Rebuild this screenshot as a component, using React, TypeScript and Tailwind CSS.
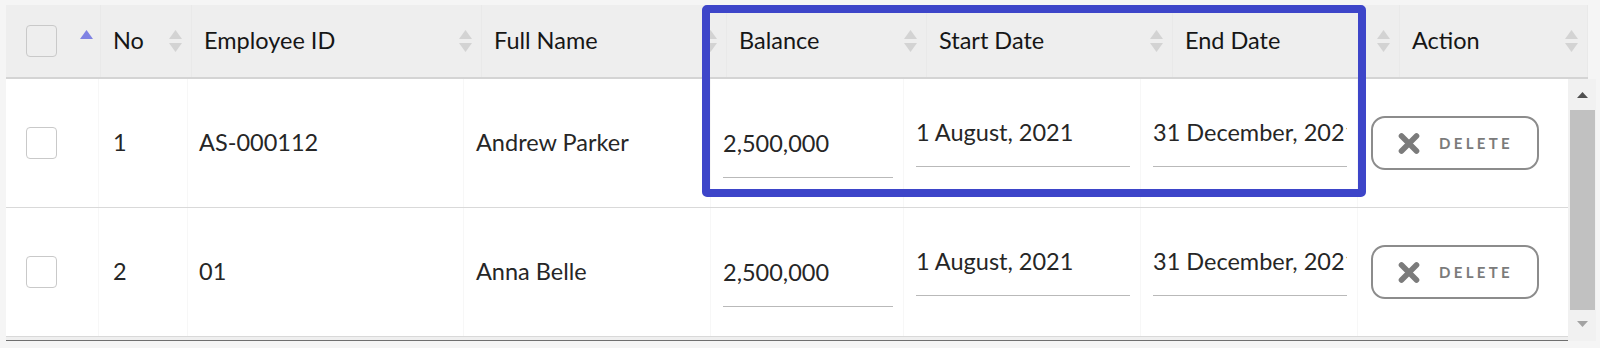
import React from "react";

const headerCols = [
  { label: "", w: "w-[95px]" },
  { label: "No", w: "w-[91px]" },
  { label: "Employee ID", w: "w-[290px]" },
  { label: "Full Name", w: "w-[245px]" },
  { label: "Balance", w: "w-[200px]" },
  { label: "Start Date", w: "w-[246px]" },
  { label: "End Date", w: "w-[227px]" },
  { label: "Action", w: "w-[188px]" },
];

const rows = [
  { no: "1", id: "AS-000112", name: "Andrew Parker", balance: "2,500,000", start: "1 August, 2021", end: "31 December, 2021" },
  { no: "2", id: "01", name: "Anna Belle", balance: "2,500,000", start: "1 August, 2021", end: "31 December, 2021" },
];

function SortIcon({ active }: { active?: boolean }) {
  return (
    <svg width="13" height="23" viewBox="0 0 13 23" className="shrink-0">
      <polygon points="6.5,0 13,9 0,9" fill={active ? "#7f82e3" : "#d3d3d3"} />
      {!active && <polygon points="0,13 13,13 6.5,22" fill="#d3d3d3" />}
    </svg>
  );
}

function Checkbox() {
  return <div className="h-[32px] w-[31px] rounded-[4px] border-[1.5px] border-[#c9c9c9]" />;
}

function DeleteButton() {
  return (
    <button className="flex h-[54px] w-[168px] items-center rounded-[14px] border-2 border-[#8c8c8c] bg-white pl-[25px]">
      <svg width="22" height="21" viewBox="0 0 22 21">
        <path d="M3.5 3 L18.5 18 M18.5 3 L3.5 18" stroke="#7b7b7b" strokeWidth="5.6" strokeLinecap="round" />
      </svg>
      <span className="ml-[19px] text-[15px] font-bold tracking-[0.22em] text-[#7b7b7b]">DELETE</span>
    </button>
  );
}

function FieldInput({ value, top }: { value: string; top: string }) {
  return (
    <div className={`w-full overflow-hidden border-b border-[#b9b9b9] pb-[21px] ${top}`}>
      <div className="whitespace-nowrap text-[23.5px] leading-[26px] text-[#262626]">{value}</div>
    </div>
  );
}

export default function App() {
  return (
    <div className="min-h-screen bg-[#f5f5f5] pl-[6px] pt-[5px] font-['Lato','Liberation_Sans',sans-serif]">
      <div className="relative w-[1590px]">
        {/* header */}
        <div className="flex h-[74px] w-[1582px] border-b-2 border-[#d4d4d4] bg-[#eeeeee]">
          {headerCols.map((c, i) => (
            <div
              key={i}
              className={`${c.w} flex items-center justify-between border-r border-[#e9e9e9] ${i === 0 ? "pl-[20px] pr-[7px]" : "pl-3 pr-[9px]"}`}
            >
              {i === 0 ? <Checkbox /> : <span className="text-[23.5px] text-[#161616]">{c.label}</span>}
              {i === 0 ? <SortIcon active /> : <SortIcon />}
            </div>
          ))}
        </div>

        {/* body */}
        <div className="flex">
          <div className="w-[1562px] bg-white">
            {rows.map((r) => (
              <div key={r.no} className="flex h-[129px] border-b border-[#d9d9d9] text-[23.5px] text-[#262626]">
                <div className="flex w-[93px] items-center border-r border-[#f7f7f7] pl-[20px]">
                  <Checkbox />
                </div>
                <div className="flex w-[89px] items-center border-r border-[#f7f7f7] pl-[14px]">{r.no}</div>
                <div className="flex w-[276px] items-center border-r border-[#f7f7f7] pl-[11px]">{r.id}</div>
                <div className="flex w-[247px] items-center border-r border-[#f7f7f7] pl-[12px]">{r.name}</div>
                <div className="flex w-[193px] items-start border-r border-[#f7f7f7] pl-[12px] pr-[10px]">
                  <FieldInput value={r.balance} top="pt-[51px]" />
                </div>
                <div className="flex w-[237px] items-start border-r border-[#f7f7f7] pl-[12px] pr-[10px]">
                  <FieldInput value={r.start} top="pt-[40px]" />
                </div>
                <div className="flex w-[217px] items-start border-r border-[#f7f7f7] pl-[12px] pr-[10px]">
                  <FieldInput value={r.end} top="pt-[40px]" />
                </div>
                <div className="flex w-[210px] items-center pl-[13px]">
                  <DeleteButton />
                </div>
              </div>
            ))}
            <div className="h-[3px] bg-[#efefef]" />
            <div className="h-px bg-[#6f6f6f]" />
          </div>

          {/* scrollbar */}
          <div className="flex w-[28px] flex-col items-center bg-[#f1f1f1] pb-[2px]">
            <div className="flex h-[31px] items-center">
              <svg width="11" height="6" viewBox="0 0 11 6">
                <polygon points="5.5,0 11,6 0,6" fill="#505050" />
              </svg>
            </div>
            <div className="h-[200px] w-[25px] bg-[#c1c1c1]" />
            <div className="flex h-[28px] items-center">
              <svg width="11" height="6" viewBox="0 0 11 6">
                <polygon points="0,0 11,0 5.5,6" fill="#a3a3a3" />
              </svg>
            </div>
          </div>
        </div>

        {/* highlight annotation */}
        <div className="pointer-events-none absolute left-[696px] top-0 h-[192px] w-[664px] rounded-[5px] border-[8px] border-[#3d45c9]" />
      </div>
    </div>
  );
}
